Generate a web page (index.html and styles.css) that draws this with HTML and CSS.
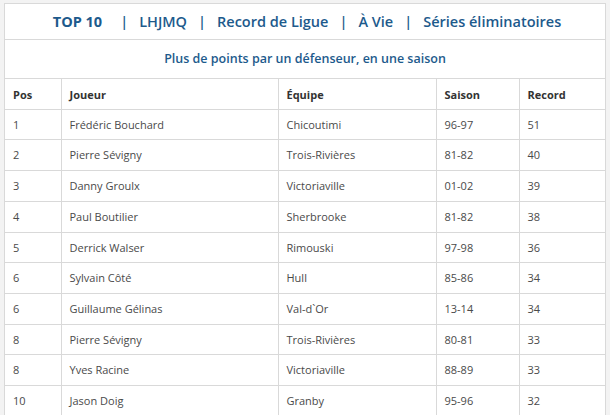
FILE: index.html
```html
<!DOCTYPE html>
<html lang="fr">
<head>
<meta charset="utf-8">
<title>Records LHJMQ</title>
<link rel="stylesheet" href="styles.css">
</head>
<body>
<div class="panel">
  <nav class="nav">
    <span class="nav-item nav-top">TOP 10</span>
    <span class="sep">|</span>
    <span class="nav-item">LHJMQ</span>
    <span class="sep">|</span>
    <span class="nav-item">Record de Ligue</span>
    <span class="sep">|</span>
    <span class="nav-item">À Vie</span>
    <span class="sep">|</span>
    <span class="nav-item">Séries éliminatoires</span>
  </nav>
  <div class="subtitle">Plus de points par un défenseur, en une saison</div>
  <table class="records">
    <colgroup>
      <col class="c-pos"><col class="c-player"><col class="c-team"><col class="c-season"><col class="c-record">
    </colgroup>
    <thead>
      <tr><th>Pos</th><th>Joueur</th><th>Équipe</th><th>Saison</th><th>Record</th></tr>
    </thead>
    <tbody>
      <tr><td>1</td><td>Frédéric Bouchard</td><td>Chicoutimi</td><td>96-97</td><td>51</td></tr>
      <tr><td>2</td><td>Pierre Sévigny</td><td>Trois-Rivières</td><td>81-82</td><td>40</td></tr>
      <tr><td>3</td><td>Danny Groulx</td><td>Victoriaville</td><td>01-02</td><td>39</td></tr>
      <tr><td>4</td><td>Paul Boutilier</td><td>Sherbrooke</td><td>81-82</td><td>38</td></tr>
      <tr><td>5</td><td>Derrick Walser</td><td>Rimouski</td><td>97-98</td><td>36</td></tr>
      <tr><td>6</td><td>Sylvain Côté</td><td>Hull</td><td>85-86</td><td>34</td></tr>
      <tr><td>6</td><td>Guillaume Gélinas</td><td>Val-d`Or</td><td>13-14</td><td>34</td></tr>
      <tr><td>8</td><td>Pierre Sévigny</td><td>Trois-Rivières</td><td>80-81</td><td>33</td></tr>
      <tr><td>8</td><td>Yves Racine</td><td>Victoriaville</td><td>88-89</td><td>33</td></tr>
      <tr><td>10</td><td>Jason Doig</td><td>Granby</td><td>95-96</td><td>32</td></tr>
    </tbody>
  </table>
</div>
</body>
</html>
```
FILE: styles.css
```css
html, body {
  margin: 0;
  padding: 0;
  background: #f3f3f3;
}
body {
  padding: 3px 4px 0 4px;
  font-family: "Open Sans", "DejaVu Sans", sans-serif;
}
.panel {
  width: 600px;
  background: #fff;
  border: 1px solid #d9d9d9;
}
.nav {
  display: flex;
  justify-content: center;
  align-items: center;
  height: 35px;
  border-bottom: 1px solid #d9d9d9;
  color: #1d5a8c;
  font-size: 14.5px;
  font-weight: 600;
  padding-left: 4px;
}
.nav-top {
  font-weight: 700;
  margin-right: 7px;
}
.sep {
  margin: 0 11px;
}
.subtitle {
  height: 38px;
  line-height: 38px;
  text-align: center;
  color: #1d5a8c;
  font-size: 12.5px;
  font-weight: 600;
  border-bottom: 1px solid #d9d9d9;
}
.records {
  width: 100%;
  table-layout: fixed;
  border-collapse: collapse;
  border-style: hidden;
  font-size: 11px;
  line-height: 1.428571;
}
.c-pos { width: 56px; }
.c-player { width: 217px; }
.c-team { width: 158px; }
.c-season { width: 83px; }
.c-record { width: 86px; }
.records th,
.records td {
  border: 1px solid #d9d9d9;
  text-align: left;
  padding: 7px 8px;
  white-space: nowrap;
}
.records th {
  padding-top: 8px;
  padding-bottom: 6px;
  color: #333;
  font-weight: 700;
}
.records td {
  color: #4a4a4a;
}
```
